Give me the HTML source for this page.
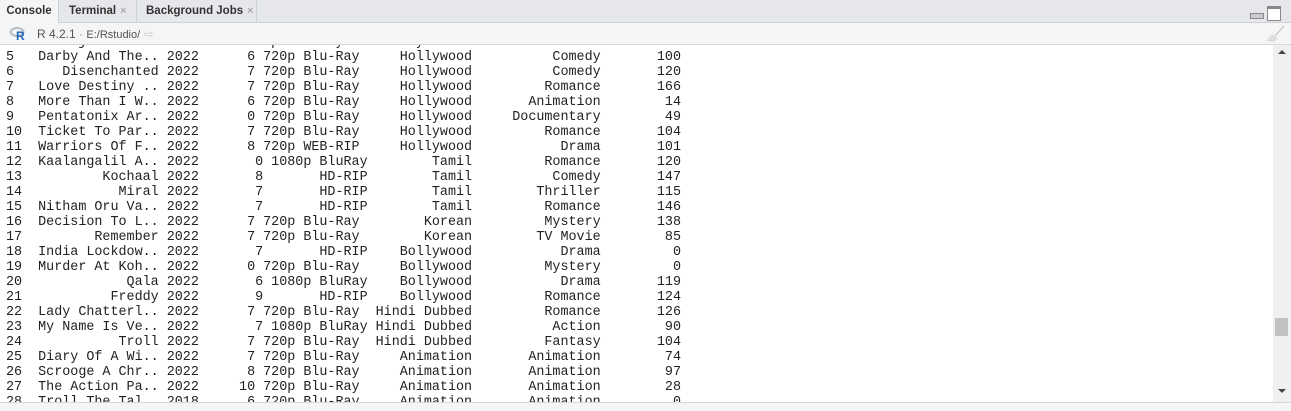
<!DOCTYPE html>
<html><head><meta charset="utf-8"><style>
body{margin:0;width:1291px;height:410px;overflow:hidden;background:#fff;font-family:"Liberation Sans",sans-serif;position:relative}
.tabs{position:absolute;left:0;top:0;width:1291px;height:22px;background:#e5e7ea;border-bottom:1px solid #d0d3d6}
.tab{position:absolute;top:0;height:22px;line-height:23px;font-size:12px;color:#333;border-right:1px solid #d0d3d6}
.x{color:#aaa;font-size:11px;margin-left:4px}
.tool{position:absolute;left:0;top:23px;width:1291px;height:21px;background:#f3f5f7;border-bottom:1px solid #d6d9dc;font-size:12px;color:#555}
.con{position:absolute;left:0;top:45px;width:1273px;height:357px;overflow:hidden}
pre{position:absolute;left:6px;top:-10px;margin:0;font-family:"Liberation Mono",monospace;font-size:13.4px;line-height:15px;color:#222}
.sb{position:absolute;left:1273px;top:45px;width:18px;height:357px;background:#f0f0f0}
.bot{position:absolute;left:0;top:402px;width:1291px;height:8px;background:#f3f5f7;border-top:1px solid #d6d9dc}
</style></head><body>
<div class="tabs">
<div class="tab" style="left:0;width:58px;background:#f3f5f7;text-align:center;height:23px;font-weight:bold;font-size:11.5px">Console</div>
<div class="tab" style="left:59px;width:78px;padding-left:10px;box-sizing:border-box;font-weight:bold;font-size:11.5px">Terminal<span class="x">×</span></div>
<div class="tab" style="left:137px;width:120px;padding-left:9px;box-sizing:border-box;font-weight:bold;font-size:11.5px">Background Jobs<span class="x">×</span></div>
<div style="position:absolute;left:1250px;top:13px;width:12px;height:4px;border:1px solid #888;background:#ccc"></div>
<div style="position:absolute;left:1267px;top:6px;width:12px;height:11px;border:1px solid #888;border-top:3px solid #888;background:#fff"></div>
</div>
<div class="tool">
<svg style="position:absolute;left:9px;top:3px" width="18" height="15"><ellipse cx="8" cy="6" rx="7.5" ry="5" fill="#b8bfc8"/><ellipse cx="8" cy="6" rx="5" ry="3" fill="#f3f5f7"/><text x="7" y="14" font-family="Liberation Sans" font-weight="bold" font-size="12" fill="#2165b6">R</text></svg>
<span style="position:absolute;left:37px;top:4px">R 4.2.1 <span style="color:#999">·</span> <span style="font-size:11px">E:/Rstudio/</span> <span style="color:#ccc">⇨</span></span>
<svg style="position:absolute;left:1264px;top:2px" width="22" height="18"><path d="M20 1 L11 11" stroke="#ccc" stroke-width="1.5"/><path d="M8 9 L14 13 L10 17 L2 16 Z" fill="#ddd"/></svg>
</div>
<div class="con"><pre>4   Jumanji Wel.. 2022      7 720p Blu-Ray     Hollywood       Adventure       120
5   Darby And The.. 2022      6 720p Blu-Ray     Hollywood          Comedy       100
6      Disenchanted 2022      7 720p Blu-Ray     Hollywood          Comedy       120
7   Love Destiny .. 2022      7 720p Blu-Ray     Hollywood         Romance       166
8   More Than I W.. 2022      6 720p Blu-Ray     Hollywood       Animation        14
9   Pentatonix Ar.. 2022      0 720p Blu-Ray     Hollywood     Documentary        49
10  Ticket To Par.. 2022      7 720p Blu-Ray     Hollywood         Romance       104
11  Warriors Of F.. 2022      8 720p WEB-RIP     Hollywood           Drama       101
12  Kaalangalil A.. 2022       0 1080p BluRay        Tamil         Romance       120
13          Kochaal 2022       8       HD-RIP        Tamil          Comedy       147
14            Miral 2022       7       HD-RIP        Tamil        Thriller       115
15  Nitham Oru Va.. 2022       7       HD-RIP        Tamil         Romance       146
16  Decision To L.. 2022      7 720p Blu-Ray        Korean         Mystery       138
17         Remember 2022      7 720p Blu-Ray        Korean        TV Movie        85
18  India Lockdow.. 2022       7       HD-RIP    Bollywood           Drama         0
19  Murder At Koh.. 2022      0 720p Blu-Ray     Bollywood         Mystery         0
20             Qala 2022       6 1080p BluRay    Bollywood           Drama       119
21           Freddy 2022       9       HD-RIP    Bollywood         Romance       124
22  Lady Chatterl.. 2022      7 720p Blu-Ray  Hindi Dubbed         Romance       126
23  My Name Is Ve.. 2022       7 1080p BluRay Hindi Dubbed          Action        90
24            Troll 2022      7 720p Blu-Ray  Hindi Dubbed         Fantasy       104
25  Diary Of A Wi.. 2022      7 720p Blu-Ray     Animation       Animation        74
26  Scrooge A Chr.. 2022      8 720p Blu-Ray     Animation       Animation        97
27  The Action Pa.. 2022     10 720p Blu-Ray     Animation       Animation        28
28  Troll The Tal.. 2018      6 720p Blu-Ray     Animation       Animation         0</pre></div>
<div class="sb">
<svg style="position:absolute;left:4px;top:4px" width="10" height="6"><path d="M1 5 L5 1 L9 5Z" fill="#444"/></svg>
<div style="position:absolute;left:2px;top:273px;width:13px;height:18px;background:#c1c1c1"></div>
<svg style="position:absolute;left:4px;top:343px" width="10" height="6"><path d="M1 1 L9 1 L5 5Z" fill="#444"/></svg>
</div>
<div class="bot"></div>
</body></html>
